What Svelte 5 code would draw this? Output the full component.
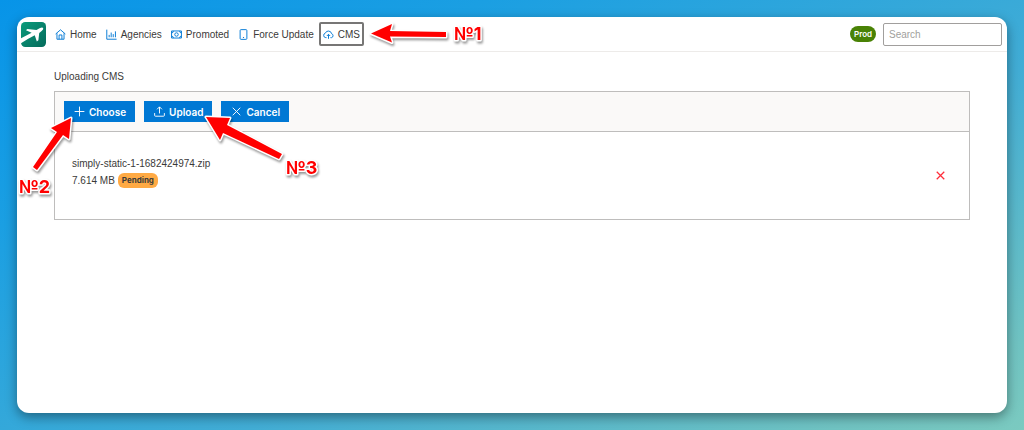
<script lang="ts">
	let search = $state('');
	let activeItem = $state('CMS');
	let files = $state([{ name: 'simply-static-1-1682424974.zip', size: '7.614 MB', status: 'Pending' }]);

	const navItems = ['Home', 'Agencies', 'Promoted', 'Force Update', 'CMS'];

	function removeFile(index: number) {
		files = files.filter((_, i) => i !== index);
	}

	// Placeholder function for sending the files
	function upload() {
		console.log('Uploading', files.length);
	}
</script>

{#snippet icon(name: string)}
	<svg class="icon" class:danger={name === 'Remove'} viewBox="0 0 14 14" aria-hidden="true">
		{#if name === 'Home'}
			<path d="M.8 6.4 7 1l6.200 5.400M2.500 5.400V13h9V5.400M5.200 13V7.600h3.600V13" />
		{:else if name === 'Agencies'}
			<path d="M1 .8V13h12.500M4 7.500v3M6.600 4.500v6M9.200 6.500v4M12 3v7.500" />
		{:else if name === 'Promoted'}
			<path d="M.7 2.500h12.600v9H.7zM.7 5q2.300 0 2.300-2.500M13.300 5Q11 5 11 2.500M.7 9Q3 9 3 11.500M13.300 9Q11 9 11 11.500" />
			<circle cx="7" cy="7" r="2.200" />
		{:else if name === 'Force Update'}
			<rect x="2.700" y=".8" width="8.600" height="12.400" rx="1.200" />
			<path d="M6.300 10.800h1.400" />
		{:else if name === 'CMS'}
			<path d="M4.500 11H3.600A2.900 2.900 0 0 1 3 5.300a4.100 4.100 0 0 1 7.900.7 2.600 2.600 0 0 1 0 5H9.500M7 12.500V7M4.900 8.900 7 6.800l2.100 2.100" />
		{:else if name === 'Choose'}
			<path d="M7 .8v12.400M.8 7h12.400" />
		{:else if name === 'Upload'}
			<path d="M7 9.500V1.200M3.900 4.200 7 1.100l3.100 3.100M.8 9v3q0 1 1 1h10.400q1 0 1-1V9" />
		{:else}
			<path d="m2.200 2.200 9.600 9.600M11.800 2.200l-9.600 9.600" />
		{/if}
	</svg>
{/snippet}

<div class="desktop">
	<div class="window">
		<header class="header">
			<svg class="logo" viewBox="0 0 24 24" aria-label="Logo">
				<defs>
					<linearGradient id="logo-fill" x1="0" y1="0" x2="1" y2="1">
						<stop offset="0" stop-color="#0a9c7c" />
						<stop offset="1" stop-color="#056a5b" />
					</linearGradient>
				</defs>
				<rect width="24" height="24" rx="4" fill="url(#logo-fill)" />
				<path
					d="M0 15.500 10.200 10.200 4.800 7.800 6 6.800l8.900.8 2.900-1.700q2.700-1 3.500-.2.500 1.200-1.500 2.900l-2.300 1.900-.8 6.900-1.500 1.200-2-5.900Q7 15.700 0 20.500z"
					fill="#fff"
				/>
			</svg>
			<nav class="nav">
				{#each navItems as item}
					<button class="nav-item" class:active={item === activeItem} onclick={() => (activeItem = item)}>
						{@render icon(item)}
						{item}
					</button>
				{/each}
			</nav>
			<span class="env">Prod</span>
			<input class="search" type="text" placeholder="Search" aria-label="Search" bind:value={search} />
		</header>

		<main class="content">
			<h1 class="title">Uploading CMS</h1>
			<section class="uploader">
				<div class="toolbar">
					<button class="btn">{@render icon('Choose')}Choose</button>
					<button class="btn" onclick={upload}>{@render icon('Upload')}Upload</button>
					<button class="btn" onclick={() => (files = [])}>{@render icon('Cancel')}Cancel</button>
				</div>
				{#each files as file, i}
					<div class="file">
						<div class="file-info">
							<span>{file.name}</span>
							<div class="file-meta">
								<span>{file.size}</span>
								<span class="badge">{file.status}</span>
							</div>
						</div>
						<button class="remove" aria-label="Remove {file.name}" onclick={() => removeFile(i)}>
							{@render icon('Remove')}
						</button>
					</div>
				{/each}
			</section>
		</main>
	</div>

	<!-- Step markers drawn over the page -->
	<svg class="steps" width="520" height="220" viewBox="0 0 520 220">
		<g class="arrow">
			<path d="M371 33.500 392 24l-2 7 56 1v5l-56-.5 2 6z" />
			<path d="M71 118 69 139l-6-4-26 35-4-3 24-35-6-4z" />
			<path d="M206 117l24 1-3 7 55 29-3 5-56-26-3 7z" />
		</g>
		<g class="step-label">
			<text x="454" y="40">№1</text>
			<text x="19" y="193">№2</text>
			<text x="286" y="174">№3</text>
		</g>
	</svg>
</div>

<style>
	:global(body) {
		margin: 0;
	}

	.desktop {
		--blue: #0078d4;
		--red: #ff2d3a;
		--text: #3b3a39;
		--border: #bebdbc;

		position: relative;
		display: flex;
		min-height: 100vh;
		padding: 17px;
		box-sizing: border-box;
		background: linear-gradient(155deg, #0794e8 0%, #1b9fe2 25%, #42add5 60%, #70c3c2 90%, #7bcac0 100%);
		color: var(--text);
		font-family: 'Liberation Sans', Arial, sans-serif;
		font-size: 10px;
		line-height: 16px;
	}

	.window {
		flex: 1;
		min-width: 0;
		border-radius: 12px;
		background: #fff;
		box-shadow: 0 4px 12px rgba(0, 0, 0, 0.4);
	}

	button,
	input {
		font: inherit;
		color: inherit;
		box-sizing: border-box;
	}

	button {
		border: none;
		background: none;
		cursor: pointer;
	}

	.icon {
		width: 11px;
		height: 11px;
		fill: none;
		stroke: currentColor;
		stroke-width: 1.2;
		flex-shrink: 0;
	}

	.icon.danger {
		stroke: var(--red);
		stroke-width: 1.6;
	}

	.header {
		display: flex;
		align-items: center;
		height: 35px;
		padding: 0 5px 0 4px;
		box-sizing: border-box;
		border-bottom: 1px solid #edebe9;
	}

	.logo {
		width: 25px;
		height: 25px;
	}

	.nav {
		display: flex;
		gap: 1px;
		margin: 0 auto 0 5px;
	}

	.nav-item {
		display: flex;
		align-items: center;
		gap: 4px;
		height: 24px;
		padding: 1px 2px 0;
		border: 2px solid transparent;
		border-radius: 2px;
		white-space: nowrap;
	}

	.nav-item.active {
		border-color: #777675;
	}

	.nav-item .icon {
		color: var(--blue);
	}

	.env,
	.btn,
	.badge,
	.step-label {
		font-family: Inter, 'Liberation Sans', sans-serif;
	}

	.env {
		padding: 0 4px;
		border-radius: 8px;
		background: #498205;
		color: #fff;
		font-size: 8px;
		font-weight: 600;
	}

	.search {
		width: 119px;
		height: 23px;
		margin-left: 7px;
		padding: 0 5px;
		border: 1px solid #a19f9d;
		border-radius: 2px;
	}

	.search::placeholder {
		color: #a19f9d;
	}

	.content {
		padding: 17px 37px;
	}

	.title {
		margin: 0 0 6px;
		font-size: 10px;
		font-weight: 400;
	}

	.uploader {
		border: 1px solid var(--border);
	}

	.toolbar {
		display: flex;
		gap: 9px;
		padding: 9px;
		border-bottom: 1px solid var(--border);
		background: #faf9f8;
	}

	.btn {
		display: flex;
		align-items: center;
		gap: 4px;
		height: 21px;
		padding: 0 9px 0 10px;
		background: var(--blue);
		color: #fff;
		font-weight: 600;
	}

	.file {
		display: flex;
		align-items: center;
		justify-content: space-between;
		min-height: 87px;
		padding: 0 17px;
	}

	.file-info {
		padding-bottom: 7px;
		line-height: 17px;
	}

	.file-meta {
		display: flex;
		align-items: center;
		gap: 3px;
	}

	.badge {
		padding: 0 4px;
		border-radius: 6px;
		background: #ffaa44;
		font-size: 8px;
		font-weight: 700;
		line-height: 15px;
	}

	.remove {
		display: flex;
		padding: 6px;
	}

	.steps {
		position: absolute;
		top: 0;
		left: 0;
		pointer-events: none;
		filter: drop-shadow(1px 2px 1px rgba(0, 0, 0, 0.4));
	}

	.arrow,
	.step-label {
		fill: #ff0000;
		stroke: #fff;
		stroke-width: 3;
		stroke-linejoin: round;
		paint-order: stroke;
	}

	.step-label {
		font-size: 18px;
		font-weight: 700;
	}
</style>
